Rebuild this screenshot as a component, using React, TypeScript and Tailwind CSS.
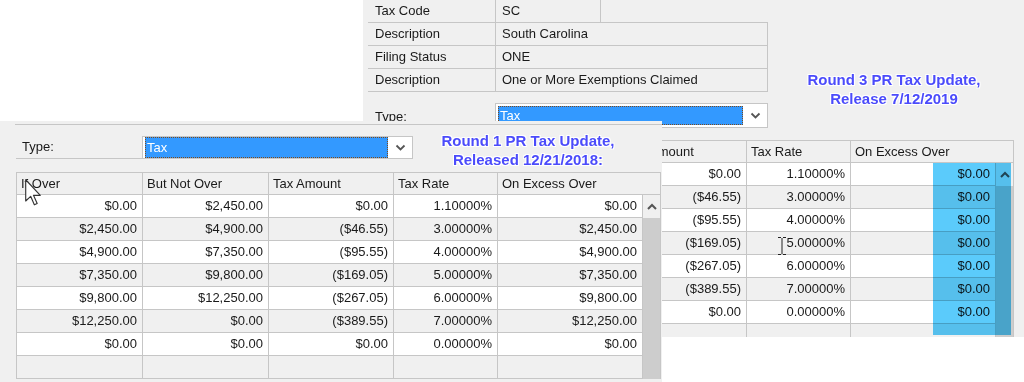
import React from "react";

const LINE = "border-[#c6c6c6]";

type Row = string[];

const frontRows: Row[] = [
  ["$0.00", "$2,450.00", "$0.00", "1.10000%", "$0.00"],
  ["$2,450.00", "$4,900.00", "($46.55)", "3.00000%", "$2,450.00"],
  ["$4,900.00", "$7,350.00", "($95.55)", "4.00000%", "$4,900.00"],
  ["$7,350.00", "$9,800.00", "($169.05)", "5.00000%", "$7,350.00"],
  ["$9,800.00", "$12,250.00", "($267.05)", "6.00000%", "$9,800.00"],
  ["$12,250.00", "$0.00", "($389.55)", "7.00000%", "$12,250.00"],
  ["$0.00", "$0.00", "$0.00", "0.00000%", "$0.00"],
  ["", "", "", "", ""],
];

// the first two columns of the back window lie under the front window
const backRows: Row[] = [
  ["", "", "$0.00", "1.10000%", "$0.00"],
  ["", "", "($46.55)", "3.00000%", "$0.00"],
  ["", "", "($95.55)", "4.00000%", "$0.00"],
  ["", "", "($169.05)", "5.00000%", "$0.00"],
  ["", "", "($267.05)", "6.00000%", "$0.00"],
  ["", "", "($389.55)", "7.00000%", "$0.00"],
  ["", "", "$0.00", "0.00000%", "$0.00"],
  ["", "", "", "", ""],
];

const frontHeaders = ["If Over", "But Not Over", "Tax Amount", "Tax Rate", "On Excess Over"];
const backHeaders = ["", "", "Tax Amount", "Tax Rate", "On Excess Over"];
const widthClass = ["w-[126px]", "w-[126px]", "w-[125px]", "w-[104px]", "w-[145px]"];

function ChevronUp() {
  return (
    <svg width="10" height="7" viewBox="0 0 10 7">
      <path d="M1 6 L5 2 L9 6" fill="none" stroke="#555" strokeWidth="2" />
    </svg>
  );
}

function ChevronDown() {
  return (
    <svg width="11" height="7" viewBox="0 0 11 7">
      <path d="M1.5 1.5 L5.5 5.5 L9.5 1.5" fill="none" stroke="#555" strokeWidth="1.8" />
    </svg>
  );
}

function Grid({ rows, headers }: { rows: Row[]; headers: string[] }) {
  return (
    <div className={`flex flex-col border-l ${LINE} w-max`}>
      <div className={`flex h-[23px] border-t border-b ${LINE}`}>
        {headers.map((h, i) => (
          <div
            key={i}
            className={`${i === 4 ? "w-[163px]" : widthClass[i]} border-r ${LINE} flex items-center pl-[4px] bg-[#f0f0f0]`}
          >
            {h}
          </div>
        ))}
      </div>
      <div className="flex">
        <div className="flex flex-col">
          {rows.map((r, ri) => (
            <div
              key={ri}
              className={`flex h-[23px] border-b ${LINE} ${ri % 2 === 0 && ri < 7 ? "bg-white" : "bg-[#f0f0f0]"}`}
            >
              {r.map((c, ci) => (
                <div
                  key={ci}
                  className={`${widthClass[ci]} border-r ${LINE} flex items-center justify-end pr-[5px]`}
                >
                  {c}
                </div>
              ))}
            </div>
          ))}
        </div>
        <div className={`w-[18px] flex flex-col border-r ${LINE} bg-[#f0f0f0]`}>
          <div className="h-[23px] flex items-center justify-center">
            <ChevronUp />
          </div>
          <div className="flex-1 bg-[#cdcdcd]" />
        </div>
      </div>
    </div>
  );
}

function Combo({ h, blueH, w }: { h: string; blueH: string; w: string }) {
  return (
    <div className={`${w} ${h} border ${LINE} bg-white flex items-center pl-[2px]`}>
      <div
        className={`flex-1 ${blueH} bg-[#3399ff] border border-dotted border-[#7a4a20] text-white flex items-center pl-[1px]`}
      >
        Tax
      </div>
      <div className="w-[24px] flex items-center justify-center">
        <ChevronDown />
      </div>
    </div>
  );
}

function Note({ l1, l2 }: { l1: string; l2: string }) {
  return (
    <div className="flex flex-col items-center font-bold text-[15px] leading-[19px] text-[#4b4bfb] [text-shadow:0_0_2px_#fff,0_0_2px_#fff,1px_1px_0_#fff,-1px_-1px_0_#fff,1px_-1px_0_#fff,-1px_1px_0_#fff]">
      <div>{l1}</div>
      <div>{l2}</div>
    </div>
  );
}

const props = [
  ["Tax Code", "SC"],
  ["Description", "South Carolina"],
  ["Filing Status", "ONE"],
  ["Description", "One or More Exemptions Claimed"],
];

function BackWindow() {
  return (
    <div className="absolute left-[363px] top-0 w-[661px] h-[337px] bg-[#f0f0f0] overflow-hidden pl-[5px]">
      <div className="flex">
        <div className="flex flex-col">
          {props.map(([k, v], i) => (
            <div key={i} className="flex h-[23px]">
              <div className={`w-[127px] border-b ${LINE} flex items-center pl-[7px]`}>{k}</div>
              <div
                className={`${i === 0 ? "w-[106px]" : "w-[273px]"} border ${LINE} -mt-px h-[24px] flex items-center pl-[6px]`}
              >
                {v}
              </div>
            </div>
          ))}
          <div className="flex h-[25px] mt-[11px]">
            <div className="w-[127px] flex items-center pl-[7px] pt-[2px]">Type:</div>
            <Combo w="w-[273px]" h="h-[25px]" blueH="h-[19px]" />
          </div>
        </div>
        <div className="flex-1 flex justify-center pt-[70px] pr-[4px]">
          <Note l1="Round 3 PR Tax Update," l2="Release 7/12/2019" />
        </div>
      </div>
      <div className="mt-[12px] ml-px">
        <Grid rows={backRows} headers={backHeaders} />
      </div>
    </div>
  );
}

function FrontWindow() {
  return (
    <div className="absolute left-0 top-[121px] w-[662px] h-[261px] bg-[#f0f0f0] overflow-hidden">
      <div className={`mt-[3px] ml-[15px] border-t ${LINE}`} />
      <div className="flex mt-[11px] pl-[16px] h-[23px]">
        <div className={`w-[126px] border-b ${LINE} flex items-center pl-[6px]`}>Type:</div>
        <Combo w="w-[271px]" h="h-[23px]" blueH="h-[21px]" />
        <div className="w-[230px] flex justify-center self-start -mt-[5px]">
          <Note l1="Round 1 PR Tax Update," l2="Released 12/21/2018:" />
        </div>
      </div>
      <div className="mt-[13px] ml-[16px]">
        <Grid rows={frontRows} headers={frontHeaders} />
      </div>
    </div>
  );
}

export default function App() {
  return (
    <div className="relative w-[1024px] h-[382px] bg-white overflow-hidden font-['Liberation_Sans',Arial,sans-serif] text-[13px] text-[#1a1a1a]">
      <BackWindow />
      <FrontWindow />
      {/* highlight overlay */}
      <div className="absolute left-[933px] top-[163px] w-[78px] h-[172px] bg-[#5bcbfb] mix-blend-multiply" />
      {/* arrow cursor */}
      <svg className="absolute left-[25px] top-[179px]" width="17" height="27" viewBox="0 0 12 19">
        <path
          d="M0.5 0.5 L0.5 15.5 L4 12.2 L6.6 18.2 L8.6 17.3 L6 11.5 L10.8 11.5 Z"
          fill="#fff"
          stroke="#333"
          strokeWidth="0.8"
          strokeLinejoin="round"
        />
      </svg>
      {/* I-beam cursor */}
      <svg className="absolute left-[777px] top-[237px]" width="10" height="18" viewBox="0 0 10 18">
        <path d="M1 0.5 H4 M6 0.5 H9 M5 1 V17 M1 17.5 H4 M6 17.5 H9" fill="none" stroke="#222" strokeWidth="1" />
      </svg>
    </div>
  );
}
